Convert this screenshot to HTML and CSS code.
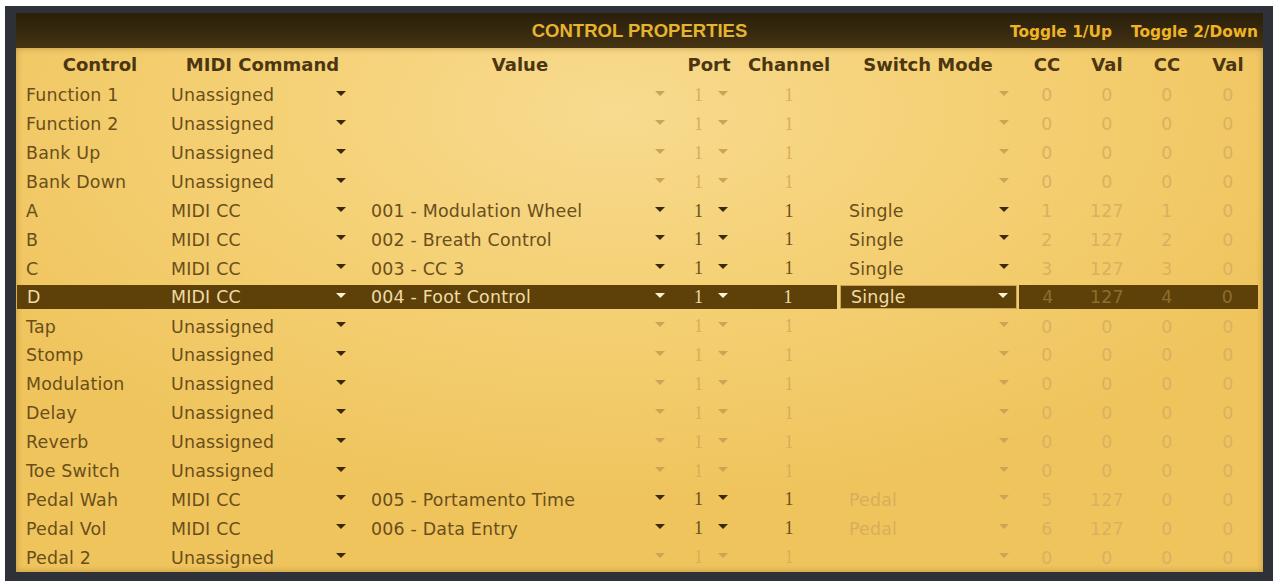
FILE: index.html
```html
<!DOCTYPE html>
<html lang="en">
<head>
    <meta charset="UTF-8">
    <title>Control Properties</title>
    <link rel="stylesheet" href="styles.css">
</head>
<body>

<div class="frame">
    <div class="titlebar">
        <div></div>
        <div class="title">CONTROL PROPERTIES</div>
        <div class="toggles"><span>Toggle 1/Up</span><span>Toggle 2/Down</span></div>
    </div>

    <div class="panel">
        <div class="row head">
            <div class="cell hc first">Control</div>
            <div class="cell hc">MIDI Command</div>
            <div class="cell hc">Value</div>
            <div class="cell hc">Port</div>
            <div class="cell hc">Channel</div>
            <div class="cell hc">Switch Mode</div>
            <div class="cell hc">CC</div>
            <div class="cell hc">Val</div>
            <div class="cell hc">CC</div>
            <div class="cell hc">Val</div>
        </div>

        <!-- unassigned rows: everything after the command is greyed -->
        <div class="row">
            <div class="cell name">Function 1</div>
            <div class="cell pick cmd">Unassigned<i class="arr"></i></div>
            <div class="cell pick val off"><i class="arr"></i></div>
            <div class="cell port off"><span>1</span><i class="arr"></i></div>
            <div class="cell chan off">1</div>
            <div class="cell pick mode off"><i class="arr"></i></div>
            <div class="cell num">0</div><div class="cell num">0</div><div class="cell num">0</div><div class="cell num">0</div>
        </div>
        <div class="row">
            <div class="cell name">Function 2</div>
            <div class="cell pick cmd">Unassigned<i class="arr"></i></div>
            <div class="cell pick val off"><i class="arr"></i></div>
            <div class="cell port off"><span>1</span><i class="arr"></i></div>
            <div class="cell chan off">1</div>
            <div class="cell pick mode off"><i class="arr"></i></div>
            <div class="cell num">0</div><div class="cell num">0</div><div class="cell num">0</div><div class="cell num">0</div>
        </div>
        <div class="row">
            <div class="cell name">Bank Up</div>
            <div class="cell pick cmd">Unassigned<i class="arr"></i></div>
            <div class="cell pick val off"><i class="arr"></i></div>
            <div class="cell port off"><span>1</span><i class="arr"></i></div>
            <div class="cell chan off">1</div>
            <div class="cell pick mode off"><i class="arr"></i></div>
            <div class="cell num">0</div><div class="cell num">0</div><div class="cell num">0</div><div class="cell num">0</div>
        </div>
        <div class="row">
            <div class="cell name">Bank Down</div>
            <div class="cell pick cmd">Unassigned<i class="arr"></i></div>
            <div class="cell pick val off"><i class="arr"></i></div>
            <div class="cell port off"><span>1</span><i class="arr"></i></div>
            <div class="cell chan off">1</div>
            <div class="cell pick mode off"><i class="arr"></i></div>
            <div class="cell num">0</div><div class="cell num">0</div><div class="cell num">0</div><div class="cell num">0</div>
        </div>

        <!-- switches A-D send CCs -->
        <div class="row">
            <div class="cell name">A</div>
            <div class="cell pick cmd">MIDI CC<i class="arr"></i></div>
            <div class="cell pick val">001 - Modulation Wheel<i class="arr"></i></div>
            <div class="cell port"><span>1</span><i class="arr"></i></div>
            <div class="cell chan">1</div>
            <div class="cell pick mode">Single<i class="arr"></i></div>
            <div class="cell num">1</div><div class="cell num">127</div><div class="cell num">1</div><div class="cell num">0</div>
        </div>
        <div class="row">
            <div class="cell name">B</div>
            <div class="cell pick cmd">MIDI CC<i class="arr"></i></div>
            <div class="cell pick val">002 - Breath Control<i class="arr"></i></div>
            <div class="cell port"><span>1</span><i class="arr"></i></div>
            <div class="cell chan">1</div>
            <div class="cell pick mode">Single<i class="arr"></i></div>
            <div class="cell num">2</div><div class="cell num">127</div><div class="cell num">2</div><div class="cell num">0</div>
        </div>
        <div class="row">
            <div class="cell name">C</div>
            <div class="cell pick cmd">MIDI CC<i class="arr"></i></div>
            <div class="cell pick val">003 - CC 3<i class="arr"></i></div>
            <div class="cell port"><span>1</span><i class="arr"></i></div>
            <div class="cell chan">1</div>
            <div class="cell pick mode">Single<i class="arr"></i></div>
            <div class="cell num">3</div><div class="cell num">127</div><div class="cell num">3</div><div class="cell num">0</div>
        </div>
        <div class="row sel">
            <div class="cell name">D</div>
            <div class="cell pick cmd">MIDI CC<i class="arr"></i></div>
            <div class="cell pick val">004 - Foot Control<i class="arr"></i></div>
            <div class="cell port"><span>1</span><i class="arr"></i></div>
            <div class="cell chan">1</div>
            <div class="cell pick mode">Single<i class="arr"></i></div>
            <div class="cell num">4</div><div class="cell num">127</div><div class="cell num">4</div><div class="cell num">0</div>
        </div>

        <div class="row">
            <div class="cell name">Tap</div>
            <div class="cell pick cmd">Unassigned<i class="arr"></i></div>
            <div class="cell pick val off"><i class="arr"></i></div>
            <div class="cell port off"><span>1</span><i class="arr"></i></div>
            <div class="cell chan off">1</div>
            <div class="cell pick mode off"><i class="arr"></i></div>
            <div class="cell num">0</div><div class="cell num">0</div><div class="cell num">0</div><div class="cell num">0</div>
        </div>
        <div class="row">
            <div class="cell name">Stomp</div>
            <div class="cell pick cmd">Unassigned<i class="arr"></i></div>
            <div class="cell pick val off"><i class="arr"></i></div>
            <div class="cell port off"><span>1</span><i class="arr"></i></div>
            <div class="cell chan off">1</div>
            <div class="cell pick mode off"><i class="arr"></i></div>
            <div class="cell num">0</div><div class="cell num">0</div><div class="cell num">0</div><div class="cell num">0</div>
        </div>
        <div class="row">
            <div class="cell name">Modulation</div>
            <div class="cell pick cmd">Unassigned<i class="arr"></i></div>
            <div class="cell pick val off"><i class="arr"></i></div>
            <div class="cell port off"><span>1</span><i class="arr"></i></div>
            <div class="cell chan off">1</div>
            <div class="cell pick mode off"><i class="arr"></i></div>
            <div class="cell num">0</div><div class="cell num">0</div><div class="cell num">0</div><div class="cell num">0</div>
        </div>
        <div class="row">
            <div class="cell name">Delay</div>
            <div class="cell pick cmd">Unassigned<i class="arr"></i></div>
            <div class="cell pick val off"><i class="arr"></i></div>
            <div class="cell port off"><span>1</span><i class="arr"></i></div>
            <div class="cell chan off">1</div>
            <div class="cell pick mode off"><i class="arr"></i></div>
            <div class="cell num">0</div><div class="cell num">0</div><div class="cell num">0</div><div class="cell num">0</div>
        </div>
        <div class="row">
            <div class="cell name">Reverb</div>
            <div class="cell pick cmd">Unassigned<i class="arr"></i></div>
            <div class="cell pick val off"><i class="arr"></i></div>
            <div class="cell port off"><span>1</span><i class="arr"></i></div>
            <div class="cell chan off">1</div>
            <div class="cell pick mode off"><i class="arr"></i></div>
            <div class="cell num">0</div><div class="cell num">0</div><div class="cell num">0</div><div class="cell num">0</div>
        </div>
        <div class="row">
            <div class="cell name">Toe Switch</div>
            <div class="cell pick cmd">Unassigned<i class="arr"></i></div>
            <div class="cell pick val off"><i class="arr"></i></div>
            <div class="cell port off"><span>1</span><i class="arr"></i></div>
            <div class="cell chan off">1</div>
            <div class="cell pick mode off"><i class="arr"></i></div>
            <div class="cell num">0</div><div class="cell num">0</div><div class="cell num">0</div><div class="cell num">0</div>
        </div>

        <!-- pedals: switch mode is fixed -->
        <div class="row">
            <div class="cell name">Pedal Wah</div>
            <div class="cell pick cmd">MIDI CC<i class="arr"></i></div>
            <div class="cell pick val">005 - Portamento Time<i class="arr"></i></div>
            <div class="cell port"><span>1</span><i class="arr"></i></div>
            <div class="cell chan">1</div>
            <div class="cell pick mode off">Pedal<i class="arr"></i></div>
            <div class="cell num">5</div><div class="cell num">127</div><div class="cell num">0</div><div class="cell num">0</div>
        </div>
        <div class="row">
            <div class="cell name">Pedal Vol</div>
            <div class="cell pick cmd">MIDI CC<i class="arr"></i></div>
            <div class="cell pick val">006 - Data Entry<i class="arr"></i></div>
            <div class="cell port"><span>1</span><i class="arr"></i></div>
            <div class="cell chan">1</div>
            <div class="cell pick mode off">Pedal<i class="arr"></i></div>
            <div class="cell num">6</div><div class="cell num">127</div><div class="cell num">0</div><div class="cell num">0</div>
        </div>
        <div class="row">
            <div class="cell name">Pedal 2</div>
            <div class="cell pick cmd">Unassigned<i class="arr"></i></div>
            <div class="cell pick val off"><i class="arr"></i></div>
            <div class="cell port off"><span>1</span><i class="arr"></i></div>
            <div class="cell chan off">1</div>
            <div class="cell pick mode off"><i class="arr"></i></div>
            <div class="cell num">0</div><div class="cell num">0</div><div class="cell num">0</div><div class="cell num">0</div>
        </div>
    </div>
</div>

</body>
</html>
```

FILE: styles.css
```css
body {
    margin: 0;
    background: #ffffff;
    font-family: "DejaVu Sans", Verdana, sans-serif;
}
.frame {
    margin: 6px 3px 0 5px;
    border-style: solid;
    border-width: 7px 10px 9px 11px;
    border-color: #2e3137;
    box-shadow: inset 0 0 2px rgba(0, 0, 0, 0.6);
}
.titlebar {
    height: 35px;
    display: grid;
    grid-template-columns: 1fr auto 1fr;
    align-items: center;
    background: linear-gradient(#2a1f09, #372910 55%, #463412);
}
.title {
    font-family: "Liberation Sans", Arial, sans-serif;
    font-weight: bold;
    font-size: 18.5px;
    color: #e6b42f;
}
.toggles {
    justify-self: end;
    display: flex;
    gap: 19px;
    padding: 2px 5px 0 0;
    font-weight: bold;
    font-size: 15.4px;
    color: #efb423;
}
.panel {
    padding-right: 4px;
    background: radial-gradient(ellipse 60% 75% at 48% 12%, #f8db90 0%, #f5d176 45%, #efc45d 100%);
    box-shadow: inset 0 0 6px rgba(90, 55, 0, 0.35);
}
.row {
    display: grid;
    grid-template-columns: 148px 197px 318px 60px 100px 178px 60px 60px 60px 1fr;
    height: 28.9px;
    font-size: 17.4px;
    letter-spacing: 0.2px;
    color: #6a4e1b;
}
.row.head {
    height: 33px;
    font-size: 18px;
    letter-spacing: 0;
    font-weight: bold;
    color: #4b3611;
}
.cell {
    display: flex;
    align-items: center;
    white-space: nowrap;
}
.hc {
    justify-content: center;
}
.hc.first {
    padding-left: 20px;
}
.name {
    padding-left: 10px;
}
.pick {
    justify-content: space-between;
}
.cmd {
    padding: 0 15px 0 7px;
}
.val {
    padding: 0 14px 0 10px;
}
.mode {
    padding: 0 8px 0 10px;
}
.pick .arr {
    margin-left: auto;
}
.arr {
    width: 0;
    height: 0;
    margin-top: -4px;
    border-left: 5.5px solid transparent;
    border-right: 5.5px solid transparent;
    border-top: 5px solid #3b2a09;
}
.port {
    gap: 15px;
    padding-left: 15px;
}
.port span, .chan {
    font-family: "Liberation Serif", "Times New Roman", serif;
    font-size: 18px;
}
.chan {
    justify-content: center;
}
.num {
    justify-content: center;
    color: #dbb061;
}
.off {
    color: #d9ad5c;
}
.off .arr {
    border-top-color: #cda356;
}

/* highlighted row */
.row.sel .cell {
    margin: 2px 0 3px;
    background: #5d4108;
    color: #f0dca6;
}
.row.sel .name {
    margin-left: 1px;
}
.row.sel .chan {
    margin-right: 2px;
}
.row.sel .mode {
    margin-left: 1px;
    border: 1px solid #c9a256;
}
.row.sel .arr {
    border-top-color: #fbf1d6;
}
.row.sel .num {
    color: #8e6d2e;
}
.row.sel .num:nth-child(7) {
    margin-left: 2px;
}
.row.sel .num:last-child {
    margin-right: 1px;
}
```
